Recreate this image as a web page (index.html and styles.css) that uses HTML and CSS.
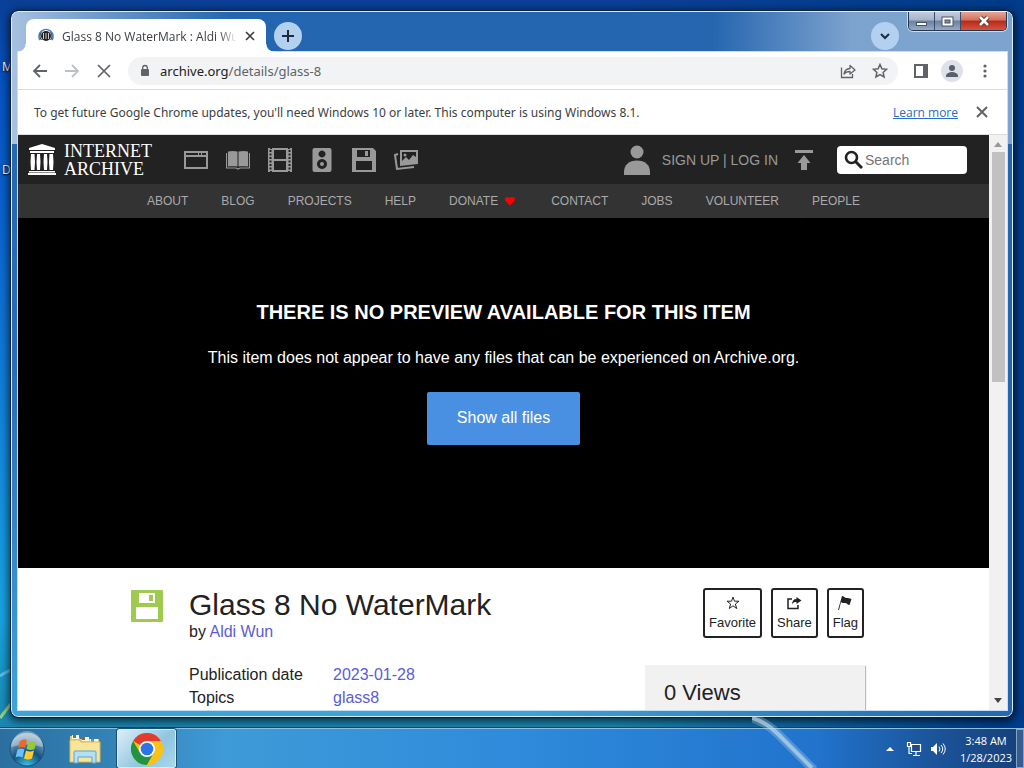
FILE: index.html
```html
<!DOCTYPE html>
<html lang="en">

<head>
    <meta charset="UTF-8">
    <meta name="viewport" content="width=device-width, initial-scale=1.0">
    <title>Glass 8 No WaterMark : Aldi Wun</title>
    <link rel="stylesheet" href="styles.css">
</head>

<body>

    <!-- Desktop with the browser window -->
    <main class="desktop">
        <svg class="wallpaper" viewBox="0 0 1024 768" preserveAspectRatio="none">
            <path d="M0 676Q8 670 14 670" stroke="#8fdcf0" stroke-width="3" fill="none" opacity=".6"/>
            <path d="M0 718L14 700" stroke="#b5e36b" stroke-width="3" fill="none" opacity=".8"/>
        </svg>
        <span class="desktop-label label-m">M</span>
        <span class="desktop-label label-d">D</span>

        <div class="window">
            <header class="titlebar">
                <div class="tab">
                    <svg class="favicon" width="16" height="16" viewBox="0 0 16 16">
                        <circle cx="8" cy="8" r="5" fill="#222"/>
                        <path d="M5.500 5v6M8 5v6M10.500 5v6" stroke="#ccc" stroke-width="1"/>
                        <path d="M2 12A7 7 0 1 1 14 12" fill="none" stroke="#3f7fc4" stroke-width="1.500"/>
                        <path d="M3.500 12A5.500 5.500 0 0 1 3.500 4.500M12.500 12A5.500 5.500 0 0 0 12.500 4.500" fill="none" stroke="#222" stroke-width="1"/>
                    </svg>
                    <span class="tab-title">Glass 8 No WaterMark : Aldi Wun</span>
                    <button class="icon-btn" aria-label="Close tab">
                        <svg width="10" height="10" viewBox="0 0 10 10"><path d="M1 1l8 8M9 1l-8 8" stroke="#3c4043" stroke-width="1.700"/></svg>
                    </button>
                </div>
                <button class="round-btn" aria-label="New tab">
                    <svg width="14" height="14" viewBox="0 0 14 14"><path d="M7 1v12M1 7h12" stroke="#1d2b3d" stroke-width="2"/></svg>
                </button>
                <button class="round-btn tab-search" aria-label="Search tabs">
                    <svg width="12" height="12" viewBox="0 0 12 12"><path d="M2 4l4 4 4-4" fill="none" stroke="#1d2b3d" stroke-width="2"/></svg>
                </button>
                <div class="window-controls">
                    <button aria-label="Minimize">
                        <svg width="13" height="11" viewBox="0 0 13 11"><rect x="1.500" y="6.500" width="10" height="3" fill="#fff" stroke="#46536a"/></svg>
                    </button>
                    <button aria-label="Maximize">
                        <svg width="13" height="11" viewBox="0 0 13 11"><rect x="1" y="1" width="11" height="9" fill="#fff" stroke="#46536a"/><rect x="4" y="4" width="5" height="3" fill="#7c8ca8" stroke="#46536a"/></svg>
                    </button>
                    <button class="close" aria-label="Close">
                        <svg width="14" height="12" viewBox="0 0 14 12"><path d="M3 2l8 8M11 2l-8 8" stroke="#5a2a2a" stroke-width="4.500"/><path d="M3 2l8 8M11 2l-8 8" stroke="#fff" stroke-width="2.600"/></svg>
                    </button>
                </div>
            </header>

            <div class="browser">
                <div class="toolbar">
                    <button class="icon-btn" aria-label="Back">
                        <svg width="16" height="16" viewBox="0 0 16 16"><path d="M15 8H2M8 2L2 8l6 6" fill="none" stroke="#5f6368" stroke-width="1.800"/></svg>
                    </button>
                    <button class="icon-btn" aria-label="Forward">
                        <svg width="16" height="16" viewBox="0 0 16 16"><path d="M1 8h13M8 2l6 6-6 6" fill="none" stroke="#bdc1c6" stroke-width="1.800"/></svg>
                    </button>
                    <button class="icon-btn" aria-label="Stop loading">
                        <svg width="16" height="16" viewBox="0 0 16 16"><path d="M2 2l12 12M14 2L2 14" stroke="#5f6368" stroke-width="1.700"/></svg>
                    </button>
                    <div class="omnibox">
                        <svg width="10" height="14" viewBox="0 0 10 14"><rect x="1" y="5" width="8" height="7" rx="1" fill="#5f6368"/><path d="M2.700 5.500V3.800a2.300 2.300 0 0 1 4.600 0v1.700" fill="none" stroke="#5f6368" stroke-width="1.300"/></svg>
                        <span class="url"><b>archive.org</b>/details/glass-8</span>
                        <button class="icon-btn" aria-label="Share page">
                            <svg width="16" height="16" viewBox="0 0 16 16"><path d="M1.500 4.500v10h11v-3.500" fill="none" stroke="#5f6368" stroke-width="1.300"/><path d="M4 11c.5-3.500 2.500-5.300 6-5.500V2.500l5 4.500-5 4V8.500C7.500 8.500 5.500 9 4 11z" fill="none" stroke="#5f6368" stroke-width="1.300" stroke-linejoin="round"/></svg>
                        </button>
                        <button class="icon-btn" aria-label="Bookmark">
                            <svg width="16" height="16" viewBox="0 0 16 16"><path d="M8 1.500l1.900 4.300 4.700.5-3.500 3.100 1 4.600L8 11.600 3.900 14l1-4.600L1.400 6.300l4.700-.5z" fill="none" stroke="#5f6368" stroke-width="1.500"/></svg>
                        </button>
                    </div>
                    <button class="icon-btn" aria-label="Side panel">
                        <svg width="14" height="14" viewBox="0 0 14 14"><rect x="1" y="1" width="12" height="12" fill="#fff" stroke="#5f6368" stroke-width="2"/><rect x="9" y="1" width="4" height="12" fill="#5f6368"/></svg>
                    </button>
                    <button class="icon-btn profile" aria-label="Profile">
                        <svg width="22" height="22" viewBox="0 0 22 22"><circle cx="11" cy="11" r="11" fill="#dfe1e8"/><circle cx="11" cy="8" r="3" fill="#5b5e6b"/><path d="M5 16c0-3 4-4 6-4s6 1 6 4v1H5z" fill="#5b5e6b"/></svg>
                    </button>
                    <button class="icon-btn" aria-label="Menu">
                        <svg width="4" height="16" viewBox="0 0 4 16"><circle cx="2" cy="3" r="1.600" fill="#5f6368"/><circle cx="2" cy="8" r="1.600" fill="#5f6368"/><circle cx="2" cy="13" r="1.600" fill="#5f6368"/></svg>
                    </button>
                </div>

                <div class="infobar">
                    <span>To get future Google Chrome updates, you'll need Windows 10 or later. This computer is using Windows 8.1.</span>
                    <a href="#">Learn more</a>
                    <button class="icon-btn" aria-label="Dismiss">
                        <svg width="12" height="12" viewBox="0 0 12 12"><path d="M1 1l10 10M11 1L1 11" stroke="#5f6368" stroke-width="2"/></svg>
                    </button>
                </div>

                <div class="viewport">
                    <div class="page">
                        <nav class="topnav">
                            <a class="logo" href="#">
                                <svg width="28" height="31" viewBox="0 0 28 31" fill="#fff">
                                    <path d="M14 0L27 4v2H1V4zM2 7h24v2H2zM1 27h26v1.500H1zM0 29h28v2H0z"/>
                                    <path d="M3 10h3.500l.5 8-.5 8H3l-.5-8zM9 10h3l.5 8-.5 8H9l-.5-8zM16 10h3l.5 8-.5 8h-3l-.5-8zM21.500 10H25l.5 8-.5 8h-3.500l-.5-8z"/>
                                </svg>
                                <span>INTERNET<br>ARCHIVE</span>
                            </a>
                            <div class="media">
                                <a href="#" aria-label="Web"><svg viewBox="0 0 24 24"><path fill-rule="evenodd" d="M0 3h24v18H0zM2 9v10h20V9zM2 5v2h12V5zM15 5v2h2V5zM18 5v2h4V5z"/></svg></a>
                                <a href="#" aria-label="Texts"><svg viewBox="0 0 24 24"><path d="M2 3.500c4-1 7-.5 9.500 0v15c-3-.5-6-.5-9.500 0zM22 3.500c-4-1-7-.5-9.500 0v15c3-.5 6-.5 9.500 0z"/><path d="M.5 5v15H10l2 1 2-1h9.500V5" fill="none" stroke="#999" stroke-width="1.200"/></svg></a>
                                <a href="#" aria-label="Video"><svg viewBox="0 0 24 24"><path fill-rule="evenodd" d="M0 0h2v1h2V0h16v1h2V0h2v24h-2v-1h-2v1H4v-1H2v1H0zM6 2v9h12V2zM6 13v9h12v-9z"/><path d="M2.500 2v20M21.500 2v20" stroke="#222" stroke-width="2" stroke-dasharray="2 1.500"/></svg></a>
                                <a href="#" aria-label="Audio"><svg viewBox="0 0 24 24"><path fill-rule="evenodd" d="M4.500 0h15Q21.500 0 21.500 2v20q0 2-2 2h-15q-2 0-2-2V2q0-2 2-2zM12 2.500a3.500 3.500 0 1 0 .01 0zM12 11a5 5 0 1 0 .01 0z"/><circle cx="12" cy="16" r="2"/></svg></a>
                                <a href="#" aria-label="Software"><svg viewBox="0 0 24 24"><path fill-rule="evenodd" d="M0 0h21l3 3v21H0zM5 2v7h13V2zM13 3h3v5h-3zM4 13v9h16v-9z"/></svg></a>
                                <a href="#" aria-label="Images"><svg viewBox="0 0 24 24"><path fill-rule="evenodd" d="M6 2h18v14L6 18zM8 4v9l4-4 3 3 4-5 3 2V4z"/><circle cx="11" cy="7" r="1.500"/><path d="M4 6L1 7l2 14 17-2" fill="none" stroke="#999" stroke-width="2"/></svg></a>
                            </div>
                            <a class="login" href="#">
                                <svg width="26" height="30" viewBox="0 0 26 30" fill="#999"><circle cx="13" cy="7" r="6.500"/><path d="M0 30v-3C0 20 5 15.500 13 15.500S26 20 26 27v3z"/></svg>
                                SIGN UP | LOG IN
                            </a>
                            <a class="upload" href="#" aria-label="Upload">
                                <svg width="18" height="20" viewBox="0 0 18 20" fill="#999"><path d="M0 0h18v3H0zM9 5l6.500 8H12v7H6v-7H2.500z"/></svg>
                            </a>
                            <label class="search">
                                <svg width="19" height="19" viewBox="0 0 19 19"><circle cx="7.500" cy="7.500" r="5.500" fill="none" stroke="#222" stroke-width="2.600"/><path d="M11 11l7 7" stroke="#222" stroke-width="3"/></svg>
                                <input type="text" placeholder="Search" aria-label="Search">
                            </label>
                        </nav>

                        <nav class="subnav">
                            <a href="#">ABOUT</a>
                            <a href="#">BLOG</a>
                            <a href="#">PROJECTS</a>
                            <a href="#">HELP</a>
                            <a href="#">DONATE <svg width="14" height="10" viewBox="0 0 14 10"><path d="M6 9.500L1.500 5C-.5 2.500 3.500-.5 6 2c2.500-2.500 6.500.5 4.500 3z" fill="#f00"/></svg></a>
                            <a href="#">CONTACT</a>
                            <a href="#">JOBS</a>
                            <a href="#">VOLUNTEER</a>
                            <a href="#">PEOPLE</a>
                        </nav>

                        <section class="preview">
                            <h2>THERE IS NO PREVIEW AVAILABLE FOR THIS ITEM</h2>
                            <p>This item does not appear to have any files that can be experienced on Archive.org.</p>
                            <a class="show-files" href="#">Show all files</a>
                        </section>

                        <section class="item">
                            <svg class="item-icon" width="32" height="32" viewBox="0 0 32 32"><path fill="#9fc94f" fill-rule="evenodd" d="M0 1q0-1 1-1h30q1 0 1 1v30q0 1-1 1H1q-1 0-1-1zM8 3v10h16V3zM18 5h4v6h-4zM5 17v12h22V17z"/></svg>
                            <div class="item-info">
                                <h1>Glass 8 No WaterMark</h1>
                                <p>by <a href="#">Aldi Wun</a></p>
                                <dl>
                                    <dt>Publication date</dt>
                                    <dd><a href="#">2023-01-28</a></dd>
                                    <dt>Topics</dt>
                                    <dd><a href="#">glass8</a></dd>
                                </dl>
                            </div>
                            <div class="item-side">
                                <div class="actions">
                                    <button>
                                        <svg width="14" height="14" viewBox="0 0 14 14"><path d="M7 1l1.500 4.200H13L9.400 8l1.300 4.500L7 9.800l-3.700 2.700L4.600 8 1 5.200h4.500z" fill="none" stroke="#222"/></svg>
                                        Favorite
                                    </button>
                                    <button>
                                        <svg width="16" height="14" viewBox="0 0 16 14"><path d="M6 3H2v9.500h10V9" fill="none" stroke="#222" stroke-width="1.500"/><path d="M10.500 1L15.500 4.500l-5 3.500V6C8 6 7 6.500 6 8.500 6 5 7.500 3 10.500 3z" fill="#222"/></svg>
                                        Share
                                    </button>
                                    <button>
                                        <svg width="16" height="14" viewBox="0 0 16 14"><path d="M5 0c2 0 2.500 2 4.500 2s2.500 0 5 1L12.500 9c-2 0-2.500-2-4.500-2s-3 0-4-1L2 14H1z" fill="#222"/></svg>
                                        Flag
                                    </button>
                                </div>
                                <div class="views">0 Views</div>
                            </div>
                        </section>
                    </div>

                    <div class="scrollbar">
                        <svg width="8" height="5" viewBox="0 0 8 5"><path d="M0 5l4-5 4 5z" fill="#999"/></svg>
                        <div class="thumb"></div>
                        <svg width="8" height="5" viewBox="0 0 8 5"><path d="M0 0l4 5 4-5z" fill="#444"/></svg>
                    </div>
                </div>
            </div>
        </div>
    </main>

    <!-- Taskbar -->
    <footer class="taskbar">
        <svg class="streak" width="70" height="52" viewBox="0 0 70 52">
            <path d="M0 2Q14 6 26 18L62 54" fill="none" stroke="#b9dcf2" stroke-width="9" opacity=".3"/>
            <path d="M0 2Q14 6 26 18L60 52" fill="none" stroke="#cfe2ee" stroke-width="4" opacity=".6"/>
        </svg>
        <button class="start" aria-label="Start">
            <svg width="36" height="36" viewBox="0 0 36 36">
                <defs>
                    <radialGradient id="orb" cx=".5" cy="1" r=".9"><stop offset="0" stop-color="#3cc4ea"/><stop offset=".5" stop-color="#12527f"/><stop offset="1" stop-color="#8fb2ca"/></radialGradient>
                </defs>
                <circle cx="18" cy="18" r="17" fill="url(#orb)" stroke="#1b4e74"/>
                <path d="M2 16A16 16 0 0 1 34 16Q18 11 2 16z" fill="#fff" opacity=".35"/>
                <path d="M11 10q4-3 7-1l-2 8q-4-2-7 0z" fill="#f0672c"/>
                <path d="M19.500 10q4 2 8 0l-2 8q-4 2-8 0z" fill="#96c83c"/>
                <path d="M8.500 18.500q4-2 7 0l-2 8q-4-2-7 0z" fill="#6bc0f5"/>
                <path d="M17 19.500q4 2 8 0l-2 8q-4 2-8 0z" fill="#ffcb2e"/>
            </svg>
        </button>
        <button class="task" aria-label="Windows Explorer">
            <svg width="32" height="30" viewBox="0 0 32 30">
                <path d="M1 2h8l2 3h19v23H1z" fill="#e8c765"/>
                <path d="M3 1h7v4H3zM13 3h7v4h-7zM21 5h8v4h-8z" fill="#fbf7e2"/>
                <path d="M4 1h3v3H4z" fill="#2ba12b"/><path d="M13 3h3v3h-3z" fill="#b35b28"/><path d="M22 5h3v3h-3z" fill="#6c8fb8"/>
                <path d="M1 6h9l2 2h19v20H1z" fill="#f8e59a" stroke="#d9b95a"/>
                <path d="M5 29V18q0-1 1-1h20q1 0 1 1v11h-4v-6H9v6z" fill="#b3e0f5" stroke="#5aa5d0"/>
            </svg>
        </button>
        <button class="task active" aria-label="Google Chrome">
            <svg width="32" height="32" viewBox="0 0 32 32">
                <circle cx="16" cy="16" r="16" fill="#fbc116"/>
                <path d="M16 16L2.140 8A16 16 0 0 1 29.860 8z" fill="#e33b2e"/>
                <path d="M2.140 8A16 16 0 0 0 16 32L22.900 20 16 16 9.100 20z" fill="#229342"/>
                <path d="M16 8h13.860A16 16 0 0 1 16 32l6.900-12z" fill="#fbc116"/>
                <circle cx="16" cy="16" r="8" fill="#fff"/>
                <circle cx="16" cy="16" r="6.300" fill="#2d74e8"/>
            </svg>
        </button>
        <div class="tray">
            <svg width="8" height="4" viewBox="0 0 8 4"><path d="M0 4l4-4 4 4z" fill="#fff"/></svg>
            <svg width="16" height="16" viewBox="0 0 16 16"><path d="M5.500 3.500h9v7h-9zM10 11v3M7 14.500h7" fill="#1d4c86" stroke="#fff" stroke-width="1.200"/><path d="M1.500 1.500h3v4h-3zM3 5.500v7h3" fill="none" stroke="#fff" stroke-width="1.200"/></svg>
            <svg width="16" height="14" viewBox="0 0 16 14"><path d="M1 5h2l4-4v12L3 9H1z" fill="#fff"/><path d="M9 4.500q2 2.500 0 5M11 3q3.500 4 0 8M13 1.500q4.500 5.500 0 11" fill="none" stroke="#fff"/></svg>
            <div class="clock">3:48 AM<br>1/28/2023</div>
        </div>
        <button class="show-desktop" aria-label="Show desktop"></button>
    </footer>

</body>

</html>
```
FILE: styles.css
```css
* {
    box-sizing: border-box;
}

body {
    margin: 0;
    height: 100vh;
    display: flex;
    flex-direction: column;
    overflow: hidden;
    font-family: "Open Sans", sans-serif;
    font-size: 12px;
    color: #3c4043;
}

button {
    font: inherit;
    color: inherit;
    border: 0;
    padding: 0;
    background: none;
}

svg {
    display: block;
    flex-shrink: 0;
}

/* Desktop */
.desktop {
    flex: 1;
    min-height: 0;
    position: relative;
    padding: 11px;
    background:
        linear-gradient(to right, transparent 60%, #003c8a 98%),
        linear-gradient(#0b3f96, #0653c4 12%, #0a63cf 30%, #1387dc 60%, #17a3e0 85%, #1a86b0);
}

.wallpaper {
    position: absolute;
    top: 0;
    left: 0;
    width: 100vw;
    height: 100vh;
}

.desktop-label {
    position: absolute;
    left: 2px;
    color: #fff;
    text-shadow: 0 1px 2px #000;
}

.label-m {
    top: 58px;
}

.label-d {
    top: 161px;
}

/* Glass window frame */
.window {
    position: relative;
    height: 100%;
    display: flex;
    flex-direction: column;
    padding: 0 5px 6px 6px;
    border: 1px solid #d8ecfa;
    border-radius: 7px;
    outline: 1px solid #0a2340;
    background:
        linear-gradient(to right, rgba(255, 255, 255, .6), rgba(255, 255, 255, .3) 10%, transparent 22%, transparent 70%, rgba(255, 255, 255, .4) 84%) 0 0 / 100% 132px no-repeat,
        linear-gradient(to right, transparent 50%, #2765ae),
        linear-gradient(#2465b0, #2b6cb8 50%, #3fa4d6);
    box-shadow: 0 2px 9px 2px rgba(0, 0, 0, .7);
}

.titlebar {
    display: flex;
    align-items: flex-start;
    height: 40px;
}

.tab {
    position: relative;
    display: flex;
    align-items: center;
    width: 240px;
    height: 34px;
    margin: 7px 8px 0;
    padding: 0 11px 0 12px;
    background: #fff;
    border-radius: 8px 8px 0 0;
}

/* Flared feet of the active tab */
.tab::before,
.tab::after {
    content: "";
    position: absolute;
    bottom: 1px;
    width: 8px;
    height: 8px;
}

.tab::before {
    right: 100%;
    background: radial-gradient(circle at 0 0, transparent 7px, #fff 8px);
}

.tab::after {
    left: 100%;
    background: radial-gradient(circle at 100% 0, transparent 7px, #fff 8px);
}

.tab-title {
    flex: 1;
    overflow: hidden;
    white-space: nowrap;
    margin: 0 8px;
    mask-image: linear-gradient(to right, #000 90%, transparent);
}

.round-btn {
    display: grid;
    place-items: center;
    width: 28px;
    height: 28px;
    margin-top: 10px;
    border-radius: 50%;
    background: #b3d0f0;
}

.tab-search {
    margin-left: auto;
}

.window-controls {
    display: flex;
    margin-left: 9px;
    height: 19px;
    border: 1px solid #26364f;
    border-top: 0;
    border-radius: 0 0 5px 5px;
    box-shadow: 0 0 0 1px rgba(255, 255, 255, .6);
    overflow: hidden;
}

.window-controls button {
    display: grid;
    place-items: center;
    width: 26px;
    border-right: 1px solid #3b4c68;
    background: linear-gradient(#c3cddd, #a5b4cb 45%, #6c809f 50%, #97aac5);
}

.window-controls .close {
    width: 45px;
    border-right: 0;
    background: linear-gradient(#e6a697, #d4705c 45%, #b42b1b 50%, #d35540);
}

/* Browser chrome */
.browser {
    flex: 1;
    min-height: 0;
    display: flex;
    flex-direction: column;
    background: #fff;
    outline: 1px solid #bfe0f5;
}

.toolbar {
    display: flex;
    align-items: center;
    gap: 16px;
    height: 38px;
    padding: 0 20px 0 14px;
    border-bottom: 1px solid #dadce0;
}

.icon-btn {
    display: grid;
    place-items: center;
}

.omnibox {
    flex: 1;
    display: flex;
    align-items: center;
    gap: 16px;
    height: 28px;
    padding: 0 10px 0 12px;
    border-radius: 14px;
    background: #f1f3f4;
}

.url {
    flex: 1;
    margin-left: -6px;
    font-family: "Noto Sans", sans-serif;
    font-size: 13px;
    color: #5f6368;
}

.url b {
    font-weight: normal;
    color: #202124;
}

.profile {
    margin-left: -3px;
    margin-right: 4px;
}

.infobar {
    display: flex;
    align-items: center;
    gap: 18px;
    height: 45px;
    padding: 0 19px 0 16px;
    border-bottom: 1px solid #dadce0;
}

.infobar span {
    flex: 1;
    font-family: "Noto Sans", sans-serif;
}

.infobar a {
    color: #2b6cc4;
}

.viewport {
    flex: 1;
    min-height: 0;
    display: flex;
    overflow: hidden;
}

.scrollbar {
    display: flex;
    flex-direction: column;
    align-items: center;
    justify-content: space-between;
    width: 18px;
    padding: 7px 0 7px;
    background: #f1f1f1;
}

.thumb {
    width: 13px;
    height: 230px;
    margin: 5px 0 auto;
    background: #c1c1c1;
}

/* archive.org page */
.page {
    flex: 1;
    font-family: "Liberation Sans", Arial, sans-serif;
    font-size: 16px;
    color: #222;
    background: #fff;
}

.page a {
    color: #5c5cd6;
    text-decoration: none;
}

.topnav {
    display: flex;
    align-items: center;
    height: 49px;
    padding: 0 22px 0 10px;
    background: #222;
}

.page .logo {
    display: flex;
    align-items: center;
    gap: 8px;
    width: 134px;
    color: #fff;
    font-family: "Liberation Serif", serif;
    font-size: 18px;
    line-height: 18px;
}

.media {
    display: flex;
    gap: 18px;
    margin-left: 22px;
}

.media svg {
    width: 24px;
    height: 24px;
    fill: #999;
}

.page .login {
    display: flex;
    align-items: center;
    gap: 12px;
    margin-left: auto;
    font-size: 14px;
    color: #999;
}

.upload {
    margin: 0 24px 0 17px;
}

.search {
    display: flex;
    align-items: center;
    width: 130px;
    height: 28px;
    padding: 0 7px;
    background: #fff;
    border-radius: 4px;
}

.search input {
    flex: 1;
    min-width: 0;
    padding: 0 2px;
    border: 0;
    outline: 0;
    font: 14px "Liberation Sans", Arial, sans-serif;
}

.subnav {
    display: flex;
    justify-content: center;
    align-items: center;
    gap: 33px;
    height: 34px;
    background: #333;
    font-size: 12px;
}

.page .subnav a {
    display: flex;
    align-items: center;
    gap: 6px;
    color: #aaa;
}

.preview {
    height: 350px;
    padding-top: 82px;
    background: #000;
    color: #fff;
    text-align: center;
}

.preview h2 {
    margin: 0;
    font-size: 20px;
    line-height: 24px;
}

.preview p {
    margin: 24px 0;
    line-height: 20px;
}

.page .show-files {
    display: inline-block;
    padding: 15px 30px 17px;
    line-height: 21px;
    color: #fff;
    background: #4a90e2;
    border-radius: 2px;
}

.item {
    display: flex;
    max-width: 745px;
    margin: 0 auto;
    padding: 20px 11px 0 0;
}

.item-icon {
    margin: 2px 26px 0 0;
}

.item-info {
    flex: 1;
}

.item h1 {
    margin: 0;
    font-size: 30px;
    font-weight: normal;
    line-height: 33px;
}

.item p {
    margin: 0;
    line-height: 22px;
}

dl {
    display: grid;
    grid-template-columns: 144px 1fr;
    margin: 20px 0 0;
    line-height: 23px;
}

dd {
    margin: 0;
}

.item-side {
    width: 220px;
}

.actions {
    display: flex;
    justify-content: flex-end;
    gap: 9px;
    padding-right: 1px;
}

.actions button {
    display: flex;
    flex-direction: column;
    align-items: center;
    gap: 5px;
    height: 50px;
    padding: 6px 4px;
    border: 2px solid #222;
    border-radius: 3px;
    font-size: 13px;
    line-height: 16px;
}

.views {
    margin-top: 27px;
    padding: 14px 19px 20px;
    background: #f1f1f1;
    box-shadow: 1px 1px 1px #bbb;
    font-size: 22px;
    line-height: 28px;
}

/* Taskbar */
.taskbar {
    position: relative;
    display: flex;
    height: 40px;
    border-top: 1px solid #8cbfe0;
    background: linear-gradient(to right, #2a6f9f, #3689bd 14%, #3f9ad8 22%, #2f8bdb 50%, #2173cc 80%, #1c579f 90%, #173f78);
    box-shadow: 0 -1px 0 #14385f;
}

.streak {
    position: absolute;
    right: 202px;
    bottom: 0;
}

.start {
    margin: 0 18px 0 9px;
}

.task {
    display: grid;
    place-items: center;
    width: 44px;
    margin-right: 10px;
}

.active {
    width: 59px;
    border: 1px solid #d6ecf8;
    border-radius: 2px;
    outline: 1px solid #1d5078;
    background: linear-gradient(135deg, #dceef7, #8fc5e0 60%, #a9d8ec);
}

.tray {
    display: flex;
    align-items: center;
    gap: 8px;
    margin-left: auto;
    color: #fff;
}

.tray svg:first-child {
    margin-right: 4px;
}

.clock {
    width: 60px;
    margin-left: 2px;
    font-size: 11px;
    line-height: 17px;
    text-align: center;
}

.show-desktop {
    width: 8px;
    border: 1px solid #7fa6cf;
    background: rgba(255, 255, 255, .15);
}
```
